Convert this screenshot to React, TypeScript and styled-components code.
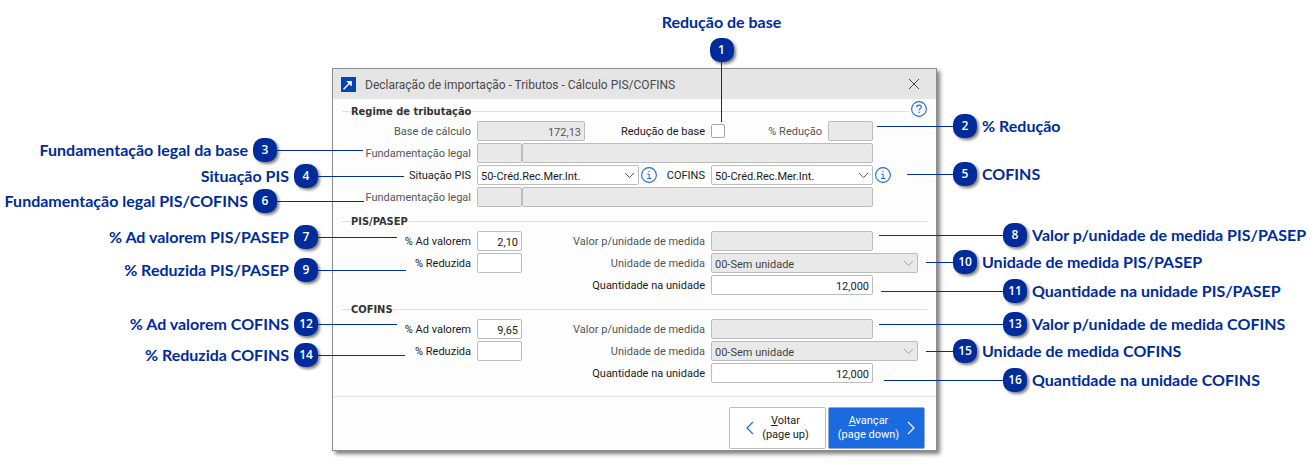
import React from "react";
import styled, { createGlobalStyle } from "styled-components";

const navy = "#002b9a";
const blue = "#1a6ae0";

const GlobalStyle = createGlobalStyle`
  *, *::before, *::after { box-sizing: border-box; }
  body { margin: 0; background: #fff; }
`;

const Page = styled.main`
  display: grid;
  grid-template-columns: 332fr 605fr 379fr;
  padding: 68px 0 16px;
  font-family: Roboto, "Liberation Sans", sans-serif;
  font-size: 11px;
  color: #1a1a1a;
`;

const Stage = styled.div`
  position: relative;
  grid-column: 2;
`;

const Dialog = styled.section`
  background: #fdfdfd;
  border: 1px solid #8e8e8e;
  box-shadow: 3px 3px 4px rgba(0, 0, 0, 0.5);
`;

const TitleBar = styled.header`
  display: flex;
  align-items: center;
  gap: 9px;
  height: 30px;
  padding: 0 16px 0 8px;
  background: #e5e5e5;
`;

const Title = styled.h1`
  flex: 1;
  margin: 0;
  padding-top: 2px;
  font-size: 12px;
  line-height: 16px;
  font-weight: 400;
  color: #4a4a4a;
`;

const IconButton = styled.button`
  display: grid;
  flex: none;
  padding: 0;
  border: 0;
  background: none;
  color: ${blue};
`;

const Body = styled.div`
  display: grid;
  gap: 4px;
  padding: 2px 0 13px;
`;

const Group = styled.fieldset`
  margin: 0;
  padding: 0;
  border: 0;
  min-width: 0;
`;

const Heading = styled.div`
  display: flex;
  align-items: center;
  height: 20px;
  padding: 0 9px;

  &::before,
  &::after {
    content: "";
    width: 9px;
    height: 1px;
    background: #dedede;
  }
  &::after {
    flex: 1;
  }
`;

const HeadingText = styled.h2`
  margin: 0;
  padding-top: 2px;
  font: 700 11px/16px "DejaVu Sans Condensed", "DejaVu Sans", sans-serif;
  color: #333;
`;

const HelpSlot = styled.span`
  display: grid;
  order: 1;
  align-self: flex-start;
  margin-left: 2px;
`;

const Fields = styled.div`
  display: grid;
  grid-template-columns: 138px minmax(0, 228fr) minmax(0, 162fr) 39px;
  align-items: center;
  gap: 2px 6px;
  padding-right: 18px;
`;

const Cell = styled.div<{ $gap?: number; $span?: number; $end?: number }>`
  display: flex;
  align-items: center;
  gap: ${(p) => p.$gap ?? 6}px;
  min-width: 0;
  height: 20px;
  grid-column-end: span ${(p) => p.$span ?? 1};
  padding-right: ${(p) => p.$end ?? 0}px;
`;

const Label = styled.label<{ $muted?: boolean }>`
  flex: 1;
  padding-top: 2px;
  line-height: 16px;
  text-align: right;
  white-space: nowrap;
  color: ${(p) => (p.$muted ? "#555" : "#1a1a1a")};
`;

const SideLabel = styled(Label)`
  flex: none;
  width: 46px;
`;

const Input = styled.input<{ $size?: "small" | "medium" }>`
  flex: ${(p) => (p.$size ? "none" : "1")};
  width: ${(p) => (p.$size === "small" ? "45px" : p.$size === "medium" ? "108px" : "0")};
  min-width: 0;
  height: 20px;
  padding: 2px 3px 0;
  border: 1px solid #bcbcbc;
  border-radius: 2px;
  background: #fff;
  font: inherit;
  text-align: right;
  color: #1a1a1a;

  &:disabled {
    background: #e9e9e9;
    color: #555;
  }
`;

const SelectBox = styled.span`
  display: grid;
  flex: 1;
  align-items: center;
  min-width: 0;

  & > * {
    grid-area: 1 / 1;
  }
  & > svg {
    justify-self: end;
    margin-right: 4px;
    pointer-events: none;
  }
`;

const Select = styled.select`
  appearance: none;
  width: 100%;
  height: 20px;
  padding: 2px 3px 0;
  border: 1px solid #bcbcbc;
  border-radius: 2px;
  background: #fff;
  font: inherit;
  color: #1a1a1a;

  &:disabled {
    background: #e9e9e9;
    color: #444;
    opacity: 1;
  }
`;

const CheckHolder = styled.span`
  position: relative;
  display: grid;
`;

const Checkbox = styled.input`
  appearance: none;
  width: 14px;
  height: 14px;
  margin: 0;
  border: 1px solid #a6a6a6;
  border-radius: 2px;
  background: #fff;

  &:checked {
    background: ${blue};
  }
`;

const Footer = styled.footer`
  display: flex;
  justify-content: flex-end;
  gap: 2px;
  padding: 10px 11px 1px;
  border-top: 1px solid #e2e2e2;
`;

const NavButton = styled.button<{ $primary?: boolean }>`
  display: flex;
  align-items: center;
  justify-content: center;
  gap: 8px;
  width: 97px;
  height: 42px;
  padding: 0;
  border: 1px solid ${(p) => (p.$primary ? "#8fa9cf" : "#bcbcbc")};
  border-radius: 2px;
  background: ${(p) => (p.$primary ? blue : "#fff")};
  color: ${(p) => (p.$primary ? "#fff" : "#1a1a1a")};
  font: inherit;
  line-height: 14px;
  white-space: nowrap;

  & > svg {
    color: ${(p) => (p.$primary ? "#fff" : blue)};
  }
`;

const Badge = styled.span`
  display: grid;
  flex: none;
  place-items: center;
  width: 24px;
  height: 24px;
  border-radius: 10px;
  background: ${navy};
  box-shadow: 2px 2px 3px rgba(0, 0, 0, 0.5);
  font: 600 12px/16px "Open Sans", sans-serif;
  color: #fff;
`;

const CalloutText = styled.span`
  font: 700 16px/20px Lato, sans-serif;
  color: ${navy};
  white-space: nowrap;
`;

const SideCallout = styled.div<{ $side: "left" | "right"; $top: number; $reach: number }>`
  position: absolute;
  top: ${(p) => p.$top}px;
  ${(p) => (p.$side === "left" ? "right" : "left")}: calc(100% - ${(p) => p.$reach}px);
  display: flex;
  flex-direction: ${(p) => (p.$side === "left" ? "row" : "row-reverse")};
  align-items: center;
  height: 24px;

  ${CalloutText} {
    margin: 0 5px;
  }
`;

const Leader = styled.span<{ $length: number }>`
  width: ${(p) => p.$length}px;
  height: 1px;
  background: ${navy};
`;

const TopCallout = styled.div`
  position: absolute;
  left: -50px;
  bottom: calc(100% + 2px);
  display: flex;
  flex-direction: column;
  align-items: center;
  width: 121px;

  ${CalloutText} {
    margin-bottom: 6px;
  }
  &::after {
    content: "";
    width: 1px;
    height: 60px;
    background: ${navy};
  }
`;

const Chevron = ({ muted }: { muted?: boolean }) => (
  <svg width="11" height="7" viewBox="0 0 11 7" fill="none" stroke={muted ? "#a5a5a5" : "#555"} aria-hidden="true">
    <path d="M1 1l4.5 4.5L10 1" />
  </svg>
);

const Arrow = ({ back }: { back?: boolean }) => (
  <svg width="8" height="14" viewBox="0 0 8 14" fill="none" stroke="currentColor" strokeWidth="1.2" aria-hidden="true">
    <path d={back ? "M7 1L1 7l6 6" : "M1 1l6 6-6 6"} />
  </svg>
);

const InfoIcon = () => (
  <svg width="16" height="16" viewBox="0 0 16 16" fill="none" stroke="currentColor" aria-hidden="true">
    <circle cx="8" cy="8" r="7.4" strokeWidth="1.1" />
    <path d="M6.2 7.2h2v4.2M6 11.5h4.4" />
    <path d="M7.4 4.7h1.2" strokeWidth="1.3" />
  </svg>
);

const HelpIcon = () => (
  <svg width="16" height="16" viewBox="0 0 16 16" fill="none" stroke="currentColor" aria-hidden="true">
    <circle cx="8" cy="8" r="7.4" strokeWidth="1.1" />
    <path d="M5.7 6.2c0-1.4 1-2.1 2.3-2.1s2.3.7 2.3 1.9c0 1.6-2.2 1.6-2.2 3.4" strokeWidth="1.1" />
    <path d="M7.4 11.4h1.3" strokeWidth="1.3" />
  </svg>
);

const AppIcon = () => (
  <svg width="15" height="15" viewBox="0 0 15 15" aria-hidden="true">
    <path fill="#0343b4" d="M0 0h15v15H0z" />
    <path d="M2.6 12.2l6.4-6.4" stroke="#fff" strokeWidth="1.5" />
    <path fill="#fff" d="M5.2 4h5.6v5.6z" />
  </svg>
);

const CloseIcon = () => (
  <svg width="12" height="12" viewBox="0 0 12 12" stroke="#444" aria-hidden="true">
    <path d="M1 1l10 10M11 1L1 11" />
  </svg>
);

type TaxProps = { id: string; title: string; rate: string };

function TaxGroup({ id, title, rate }: TaxProps) {
  return (
    <Group aria-labelledby={`${id}-title`}>
      <Heading>
        <HeadingText id={`${id}-title`}>{title}</HeadingText>
      </Heading>
      <Fields>
        <Label htmlFor={`${id}-rate`}>% Ad valorem</Label>
        <Cell>
          <Input id={`${id}-rate`} $size="small" defaultValue={rate} />
          <Label $muted htmlFor={`${id}-value`}>Valor p/unidade de medida</Label>
        </Cell>
        <Cell $span={2} $end={45}>
          <Input id={`${id}-value`} disabled />
        </Cell>

        <Label htmlFor={`${id}-reduced`}>% Reduzida</Label>
        <Cell>
          <Input id={`${id}-reduced`} $size="small" />
          <Label $muted htmlFor={`${id}-unit`}>Unidade de medida</Label>
        </Cell>
        <Cell $span={2}>
          <SelectBox>
            <Select id={`${id}-unit`} disabled>
              <option>00-Sem unidade</option>
            </Select>
            <Chevron muted />
          </SelectBox>
        </Cell>

        <Cell $span={2}>
          <Label htmlFor={`${id}-qty`}>Quantidade na unidade</Label>
        </Cell>
        <Cell $span={2} $end={45}>
          <Input id={`${id}-qty`} defaultValue="12,000" />
        </Cell>
      </Fields>
    </Group>
  );
}

function LegalBasis({ id }: { id: string }) {
  return (
    <>
      <Label $muted htmlFor={id}>Fundamentação legal</Label>
      <Cell $gap={0} $span={3} $end={45}>
        <Input id={id} $size="small" disabled />
        <Input aria-label="Descrição da fundamentação legal" disabled />
      </Cell>
    </>
  );
}

function Situation({ id }: { id: string }) {
  return (
    <>
      <SelectBox>
        <Select id={id}>
          <option>50-Créd.Rec.Mer.Int.</option>
        </Select>
        <Chevron />
      </SelectBox>
      <IconButton type="button" aria-label="Informações">
        <InfoIcon />
      </IconButton>
    </>
  );
}

type Callout = { n: number; text: string; side: "left" | "right"; top: number; reach: number; line: number };

const callouts: Callout[] = [
  { n: 2, text: "% Redução", side: "right", top: 46, reach: 60, line: 76 },
  { n: 3, text: "Fundamentação legal da base", side: "left", top: 70, reach: 31, line: 86 },
  { n: 4, text: "Situação PIS", side: "left", top: 96, reach: 72, line: 86 },
  { n: 5, text: "COFINS", side: "right", top: 94, reach: 30, line: 46 },
  { n: 6, text: "Fundamentação legal PIS/COFINS", side: "left", top: 121, reach: 32, line: 87 },
  { n: 7, text: "% Ad valorem PIS/PASEP", side: "left", top: 157, reach: 65, line: 79 },
  { n: 8, text: "Valor p/unidade de medida PIS/PASEP", side: "right", top: 155, reach: 58, line: 124 },
  { n: 9, text: "% Reduzida PIS/PASEP", side: "left", top: 190, reach: 74, line: 88 },
  { n: 10, text: "Unidade de medida PIS/PASEP", side: "right", top: 182, reach: 11, line: 27 },
  { n: 11, text: "Quantidade na unidade PIS/PASEP", side: "right", top: 211, reach: 56, line: 122 },
  { n: 12, text: "% Ad valorem COFINS", side: "left", top: 244, reach: 65, line: 79 },
  { n: 13, text: "Valor p/unidade de medida COFINS", side: "right", top: 244, reach: 58, line: 124 },
  { n: 14, text: "% Reduzida COFINS", side: "left", top: 275, reach: 73, line: 87 },
  { n: 15, text: "Unidade de medida COFINS", side: "right", top: 271, reach: 11, line: 27 },
  { n: 16, text: "Quantidade na unidade COFINS", side: "right", top: 300, reach: 53, line: 119 },
];

export default function App() {
  return (
    <Page>
      <GlobalStyle />
      <Stage>
        <Dialog role="dialog" aria-labelledby="dialog-title">
          <TitleBar>
            <AppIcon />
            <Title id="dialog-title">Declaração de importação - Tributos - Cálculo PIS/COFINS</Title>
            <IconButton type="button" aria-label="Fechar">
              <CloseIcon />
            </IconButton>
          </TitleBar>

          <Body>
            <Group aria-labelledby="regime-title">
              <Heading>
                <HeadingText id="regime-title">Regime de tributação</HeadingText>
                <HelpSlot>
                  <IconButton type="button" aria-label="Ajuda">
                    <HelpIcon />
                  </IconButton>
                </HelpSlot>
              </Heading>
              <Fields>
                <Label $muted htmlFor="base">Base de cálculo</Label>
                <Cell>
                  <Input id="base" $size="medium" defaultValue="172,13" disabled />
                  <Label htmlFor="reduce">Redução de base</Label>
                </Cell>
                <Cell $span={2} $end={45}>
                  <CheckHolder>
                    <Checkbox id="reduce" type="checkbox" />
                    <TopCallout>
                      <CalloutText>Redução de base</CalloutText>
                      <Badge>1</Badge>
                    </TopCallout>
                  </CheckHolder>
                  <Label $muted htmlFor="reduction">% Redução</Label>
                  <Input id="reduction" $size="small" disabled />
                </Cell>

                <LegalBasis id="legal-base" />

                <Label htmlFor="pis">Situação PIS</Label>
                <Cell $gap={2}>
                  <Situation id="pis" />
                  <SideLabel htmlFor="cofins">COFINS</SideLabel>
                </Cell>
                <Cell $gap={2} $span={2} $end={27}>
                  <Situation id="cofins" />
                </Cell>

                <LegalBasis id="legal-pis" />
              </Fields>
            </Group>

            <TaxGroup id="pis-pasep" title="PIS/PASEP" rate="2,10" />
            <TaxGroup id="tax-cofins" title="COFINS" rate="9,65" />
          </Body>

          <Footer>
            <NavButton type="button">
              <Arrow back />
              <span>
                <u>V</u>oltar
                <br />
                (page up)
              </span>
            </NavButton>
            <NavButton type="button" $primary>
              <span>
                <u>A</u>vançar
                <br />
                (page down)
              </span>
              <Arrow />
            </NavButton>
          </Footer>
        </Dialog>

        {callouts.map((c) => (
          <SideCallout key={c.n} $side={c.side} $top={c.top} $reach={c.reach}>
            <CalloutText>{c.text}</CalloutText>
            <Badge>{c.n}</Badge>
            <Leader $length={c.line} />
          </SideCallout>
        ))}
      </Stage>
    </Page>
  );
}
